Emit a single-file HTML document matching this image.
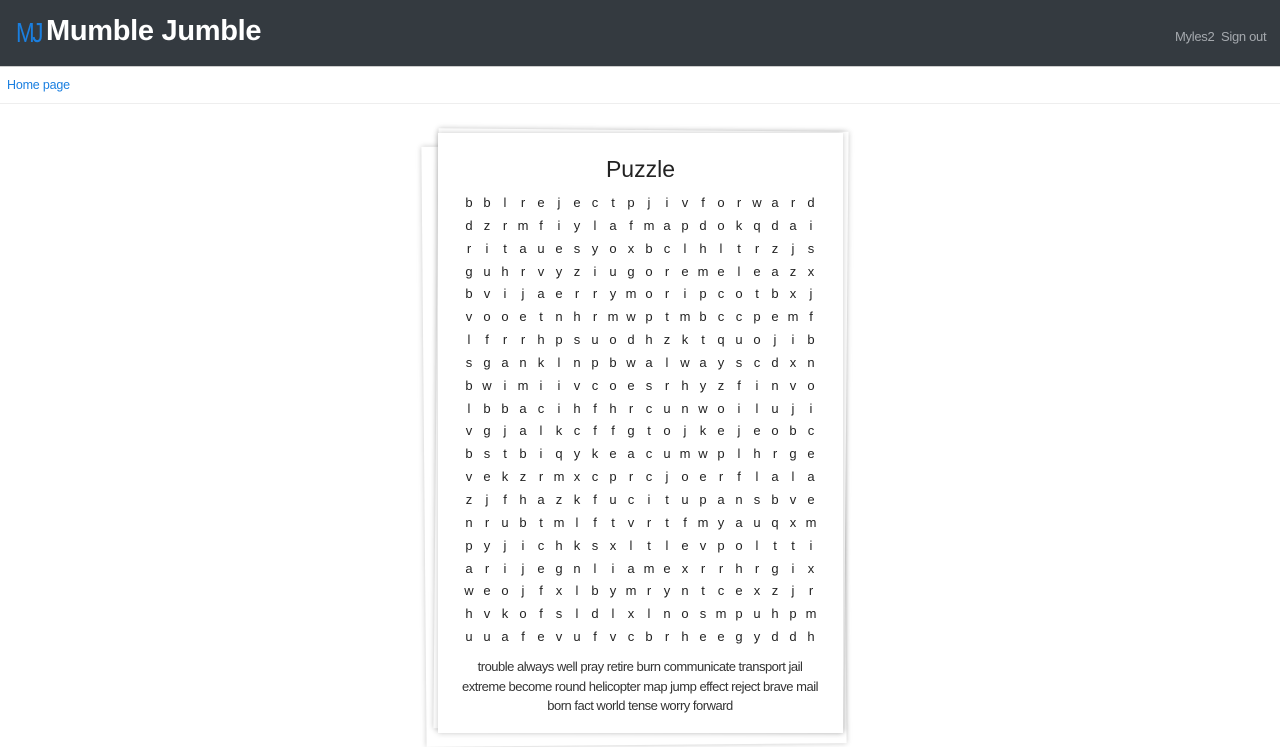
<!DOCTYPE html>
<html><head><style>
body{margin:0;width:1280px;height:720px;overflow:hidden;background:#fff;font-family:"Liberation Sans",sans-serif;position:relative}
.nav{position:absolute;left:0;top:0;width:1280px;height:66px;background:#343a40;border-bottom:1px solid #ccc}
.logo{position:absolute;left:16px;top:17px;font-size:28px;color:#1a7fe0;letter-spacing:-3px;transform:scaleX(.8);transform-origin:left}
.title{position:absolute;left:46px;top:15px;font-size:29px;color:#fff;font-weight:bold;font-family:"Liberation Sans",sans-serif;letter-spacing:-0.3px}
.nr{position:absolute;top:29px;font-size:13px;color:#a4a8ad;letter-spacing:-0.3px}
.home{position:absolute;left:7px;top:78px;font-size:12.5px;color:#1a7fe0;letter-spacing:-0.2px}
.hr{position:absolute;left:0;top:103px;width:1280px;height:1px;background:#eee}
.sheet{position:absolute;background:#fff;box-shadow:0 0 6px rgba(0,0,0,.22)}
.grid{position:absolute;left:460px;top:192px;width:360px;display:grid;grid-template-columns:repeat(20,18px);font-size:13px;color:#222}
.grid span{display:block;text-align:center;height:22.85px;line-height:22px}
.words{position:absolute;left:440px;width:400px;top:657px;text-align:center;font-size:13px;color:#333;line-height:19.5px;letter-spacing:-.5px}
</style></head><body>
<div class="nav"><div class="logo">MJ</div><div class="title">Mumble Jumble</div>
<div class="nr" style="left:1175px">Myles2</div><div class="nr" style="left:1221px">Sign out</div></div>
<div class="home">Home page</div><div class="hr"></div>
<div class="sheet" style="left:424px;top:145px;width:420px;height:600px;transform:rotate(-0.5deg)"></div>
<div class="sheet" style="left:436px;top:130px;width:410px;height:600px;transform:rotate(0.5deg)"></div>
<div class="sheet" style="left:438px;top:133px;width:405px;height:600px"></div>
<div style="position:absolute;left:438px;width:405px;top:156px;text-align:center;font-size:23px;color:#222">Puzzle</div>
<div class="grid" id="g"></div>
<div class="words">trouble always well pray retire burn communicate transport jail<br>extreme become round helicopter map jump effect reject brave mail<br>born fact world tense worry forward</div>
<script>
var r=["bblrejectpjivforward","dzrmfiylafmapdokqdai","ritauesyoxbclhltrzjs","guhrvyziugoremeleazx","bvijaerrymoripcotbxj","vooetnhrmwptmbccpemf","lfrrhpsuodhzktquojib","sganklnpbwalwayscdxn","bwimiivcoesrhyzfinvo","lbbacihfhrcunwoiluji","vgjalkcffgtojkejeobc","bstbiqykeacumwplhrge","vekzrmxcprcjoerflala","zjfhazkfucitupansbve","nrubtmlftvrtfmyauqxm","pyjichksxltlevpoltti","arijegnliamexrrhrgix","weojfxlbymryntcexzjr","hvkofsldlxlnosmpuhpm","uuafevufvcbrheegyddh"];
var h="";r.forEach(function(s){for(var i=0;i<s.length;i++)h+="<span>"+s[i]+"</span>";});
document.getElementById("g").innerHTML=h;
</script>
</body></html>
